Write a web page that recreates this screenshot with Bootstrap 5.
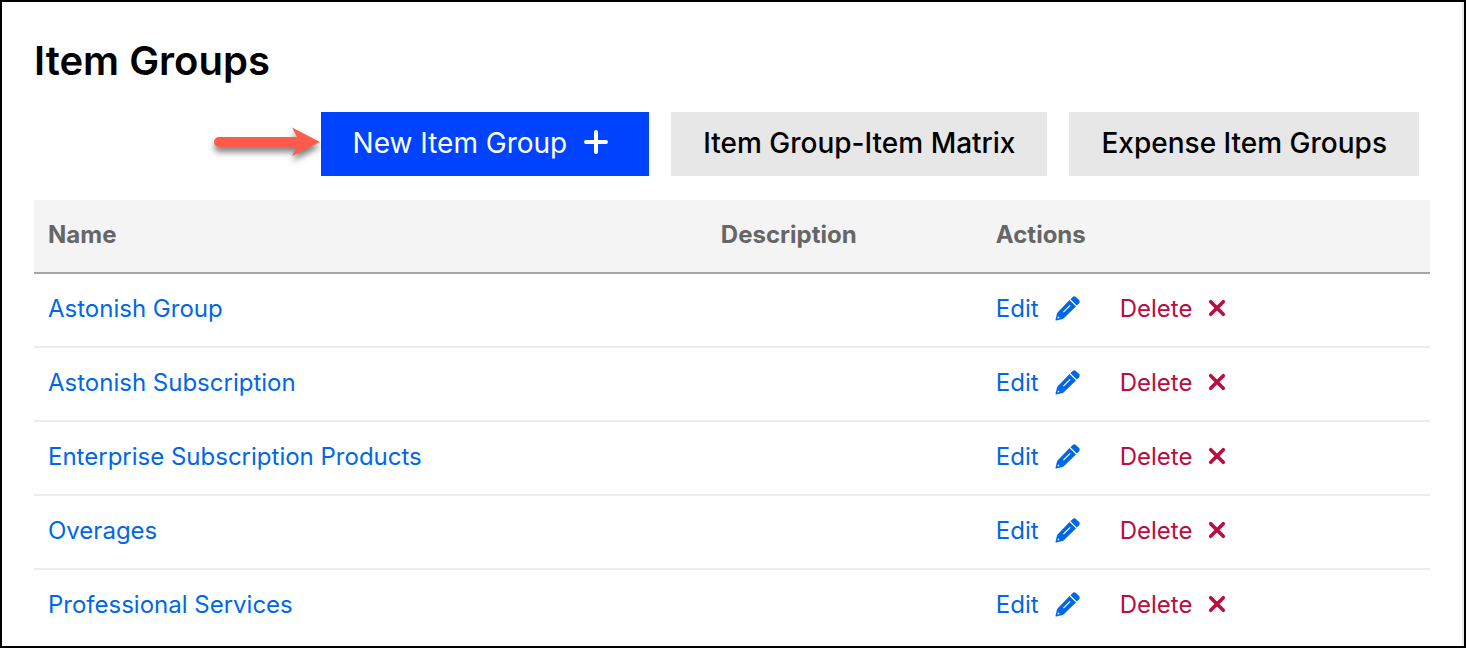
<!DOCTYPE html>
<html lang="en">
<head>
<meta charset="utf-8">
<meta name="viewport" content="width=device-width, initial-scale=1">
<title>Item Groups</title>
<link href="https://cdn.jsdelivr.net/npm/bootstrap@5.3.0/dist/css/bootstrap.min.css" rel="stylesheet">
<style>
body { font-family: Inter, "Liberation Sans", sans-serif; font-size: 24px; line-height: 36px; color: #000; background: #fff; }
.page-frame { min-height: 100vh; border: 2px solid #000; padding: 32px 32px 0; box-shadow: inset -2px 0 #e8e8e8; }
.page-body { margin-right: 2px; }
h1 { font-size: 40px; line-height: 54px; font-weight: 600; margin: 0 0 24px; }
.toolbar { gap: 22px; margin: 0 11px 24px 0; }
.toolbar .btn { --bs-btn-font-size: 28px; --bs-btn-border-width: 0; --bs-btn-border-radius: 0; --bs-btn-padding-x: 32px; --bs-btn-padding-y: 0; --bs-btn-font-weight: 500; height: 64px; line-height: 62px; padding-bottom: 2px; white-space: nowrap; }
.toolbar .btn-new { --bs-btn-bg: #0043ff; --bs-btn-color: #fff; --bs-btn-hover-bg: #0036d9; --bs-btn-hover-color: #fff; --bs-btn-font-weight: 400; }
.btn-new svg { width: 24px; height: 24px; margin: 0 9px 6px 17px; }
.btn-plain { --bs-btn-bg: #e7e7e7; --bs-btn-color: #000; --bs-btn-hover-bg: #ddd; }
.pointer { width: 110px; height: 64px; margin-right: -22px; overflow: visible; filter: drop-shadow(0 5px 3px rgba(0,0,0,.5)); }
.groups { --bs-table-color: #000; margin: 0; }
.groups > :not(caption) > * > * { padding: 17px 14px 19px; border-bottom: 2px solid #ededed; }
.groups > thead > tr > th { background: #f4f4f4; color: #666; font-weight: 700; border-bottom: 2px solid #a6a6a6; }
.groups > tbody > tr:last-child > td { border-bottom: 0; padding-bottom: 0; }
.col-title { width: 48.2%; }
.col-about { width: 19.7%; }
.groups a { text-decoration: none; color: #0068e6; }
.groups a.delete { color: #b90e40; }
.row-actions { gap: 40px; }
.row-actions a { display: flex; align-items: center; gap: 16px; }
.row-actions svg { width: 25px; height: 25px; margin-bottom: 2px; }
.row-actions .delete svg { width: 18px; height: 18px; }
</style>
</head>
<body>
<svg class="d-none" aria-hidden="true">
<symbol id="pencil" viewBox="0 0 25 25">
<path fill="currentColor" fill-rule="evenodd" d="M14.5 4 L21 10.5 L8.8 22.2 Q7.8 23 6.5 23.3 L1.3 24.5 Q.3 24.7 .5 23.7 L1.8 18.3 Q2.1 17 3 16 Z M8 15.8 L8.8 16.6 L15.6 9.8 L14.8 9 Z M3 20.3 L2.4 22.6 L4.7 22 Z"/>
<path fill="currentColor" d="M15.4 3.2 L17.7 .9 Q19.2 -.3 20.9 .9 L24.1 4.1 Q25.3 5.8 24.1 7.3 L21.8 9.6 Z"/>
</symbol>
<symbol id="cross" viewBox="0 0 18 18">
<path d="M2.7 2.7 L15.3 15.3 M15.3 2.7 L2.7 15.3" fill="none" stroke="currentColor" stroke-width="3.6" stroke-linecap="round"/>
</symbol>
</svg>
<main class="page-frame">
<div class="page-body">
<h1>Item Groups</h1>
<div class="toolbar d-flex justify-content-end">
<svg class="pointer flex-shrink-0" viewBox="0 0 110 64" aria-hidden="true"><path fill="#ff5a4c" d="M8 25 H86 L81 15.5 L109 30 L81 44 L86 35 H8 A5 5 0 0 1 8 25 Z"/></svg>
<button type="button" class="btn btn-new">New Item Group<svg viewBox="0 0 24 24" aria-hidden="true"><path d="M12 2 V22 M2 12 H22" fill="none" stroke="currentColor" stroke-width="4" stroke-linecap="round"/></svg></button>
<button type="button" class="btn btn-plain">Item Group-Item Matrix</button>
<button type="button" class="btn btn-plain">Expense Item Groups</button>
</div>
<table class="table groups">
<thead><tr><th scope="col" class="col-title">Name</th><th scope="col" class="col-about">Description</th><th scope="col">Actions</th></tr></thead>
<tbody>
<tr><td><a href="#">Astonish Group</a></td><td></td><td><div class="row-actions d-flex"><a href="#">Edit<svg aria-hidden="true"><use href="#pencil"/></svg></a><a href="#" class="delete">Delete<svg aria-hidden="true"><use href="#cross"/></svg></a></div></td></tr>
<tr><td><a href="#">Astonish Subscription</a></td><td></td><td><div class="row-actions d-flex"><a href="#">Edit<svg aria-hidden="true"><use href="#pencil"/></svg></a><a href="#" class="delete">Delete<svg aria-hidden="true"><use href="#cross"/></svg></a></div></td></tr>
<tr><td><a href="#">Enterprise Subscription Products</a></td><td></td><td><div class="row-actions d-flex"><a href="#">Edit<svg aria-hidden="true"><use href="#pencil"/></svg></a><a href="#" class="delete">Delete<svg aria-hidden="true"><use href="#cross"/></svg></a></div></td></tr>
<tr><td><a href="#">Overages</a></td><td></td><td><div class="row-actions d-flex"><a href="#">Edit<svg aria-hidden="true"><use href="#pencil"/></svg></a><a href="#" class="delete">Delete<svg aria-hidden="true"><use href="#cross"/></svg></a></div></td></tr>
<tr><td><a href="#">Professional Services</a></td><td></td><td><div class="row-actions d-flex"><a href="#">Edit<svg aria-hidden="true"><use href="#pencil"/></svg></a><a href="#" class="delete">Delete<svg aria-hidden="true"><use href="#cross"/></svg></a></div></td></tr>
</tbody>
</table>
</div>
</main>
<script src="https://cdn.jsdelivr.net/npm/bootstrap@5.3.0/dist/js/bootstrap.bundle.min.js"></script>
</body>
</html>
